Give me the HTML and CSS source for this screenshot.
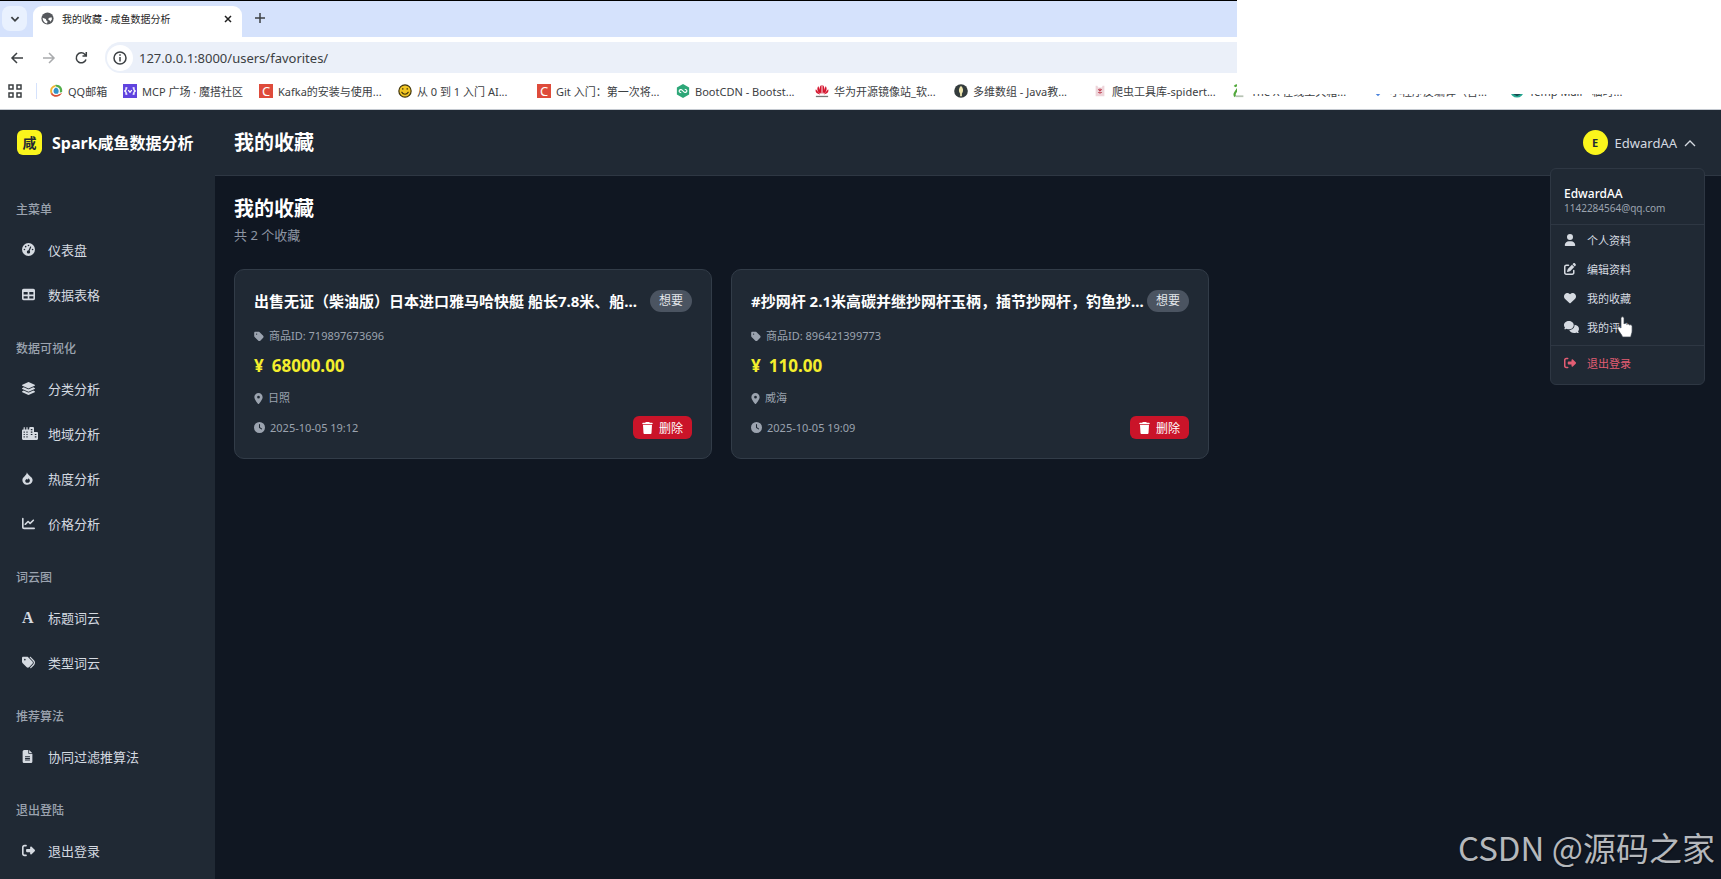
FILE: index.html
```html
<!DOCTYPE html>
<html lang="zh-CN">
<head>
    <meta charset="UTF-8">
    <meta name="viewport" content="width=device-width, initial-scale=1.0">
    <title>我的收藏 - 咸鱼数据分析</title>
    <link rel="stylesheet" href="styles.css">
</head>
<body>

    <svg class="sprite" aria-hidden="true">
        <symbol id="gauge" viewBox="0 0 512 512"><path fill-rule="evenodd" d="M0 256a256 256 0 1 1 512 0A256 256 0 1 1 0 256zM288 96a32 32 0 1 0-64 0 32 32 0 1 0 64 0zM256 416c35 0 64-29 64-64 0-17-7-33-18-45l60-136c5-12 0-26-12-32s-27 0-32 12l-60 137h-2c-35 0-64 29-64 64s29 64 64 64zM176 144a32 32 0 1 0-64 0 32 32 0 1 0 64 0zM96 288a32 32 0 1 0 0-64 32 32 0 1 0 0 64zm352-32a32 32 0 1 0-64 0 32 32 0 1 0 64 0z"/></symbol>
        <symbol id="table" viewBox="0 0 512 512"><path fill-rule="evenodd" d="M64 256V160H224v96H64zm0 64H224v96H64V320zm224 96V320H448v96H288zM448 256H288V160H448v96zM64 32C28.7 32 0 60.7 0 96V416c0 35.3 28.7 64 64 64H448c35.3 0 64-28.7 64-64V96c0-35.3-28.7-64-64-64H64z"/></symbol>
        <symbol id="layers" viewBox="0 0 512 512"><path d="M233 5q23-10 46 0l219 101q14 7 14 22t-14 22L279 251q-23 10-46 0L14 150Q0 143 0 128t14-22zM14 234l53-25 152 71q37 16 74 0l152-71 53 25q14 7 14 22t-14 22L279 379q-23 10-46 0L14 278Q0 271 0 256t14-22zM14 362l53-25 152 71q37 16 74 0l152-71 53 25q14 7 14 22t-14 22L279 507q-23 10-46 0L14 406Q0 399 0 384t14-22z"/></symbol>
        <symbol id="city" viewBox="0 0 640 512"><path fill-rule="evenodd" d="M480 48c0-26.500-21.500-48-48-48H336c-26.500 0-48 21.500-48 48V96H224V24c0-13-11-24-24-24s-24 11-24 24V96H112V24C112 11 101 0 88 0S64 11 64 24V96H48C21.500 96 0 117.500 0 144V464c0 26.500 21.500 48 48 48H592c26.500 0 48-21.500 48-48V240c0-26.500-21.500-48-48-48H480V48zM64 176h48v48H64zM176 176h48v48h-48zM64 272h48v48H64zM176 272h48v48h-48zM64 368h48v48H64zM176 368h48v48h-48zM352 80h64v48h-64zM352 176h64v48h-64zM352 272h64v48h-64zM512 272h64v48h-64zM512 368h64v48h-64z"/></symbol>
        <symbol id="fire" viewBox="0 0 448 512"><path fill-rule="evenodd" d="M200 4c12 60 60 90 120 150 60 48 112 96 112 168 0 110-93 190-208 190S16 432 16 312c0-70 50-110 100-160 50-45 80-80 84-148zM224 432c58 0 96-38 96-88 0-42-30-62-60-96-6 36-14 50-34 60-10-10-16-22-20-40-40 26-74 46-74 86 0 46 40 78 92 78z"/></symbol>
        <symbol id="chart" viewBox="0 0 512 512"><path d="M64 64c0-17.700-14.300-32-32-32S0 46.300 0 64V400c0 44.200 35.800 80 80 80H480c17.700 0 32-14.300 32-32s-14.300-32-32-32H80c-8.800 0-16-7.200-16-16V64zm406.600 86.600c12.500-12.500 12.500-32.800 0-45.300s-32.800-12.500-45.300 0L320 210.700l-57.400-57.400c-12.500-12.500-32.800-12.500-45.300 0l-112 112c-12.500 12.500-12.500 32.800 0 45.300s32.800 12.500 45.300 0L240 221.300l57.400 57.400c12.500 12.500 32.800 12.500 45.300 0l128-128z"/></symbol>
        <symbol id="tags" viewBox="0 0 512 512"><path d="M345 39.100L472.800 168.400c52.400 53 52.400 138.200 0 191.200L360.800 472.900c-9.300 9.400-24.500 9.500-33.900 .2s-9.500-24.500-.2-33.900L438.600 325.900c33.900-34.300 33.900-89.400 0-123.700L310.900 72.900c-9.300-9.400-9.200-24.600 .2-33.900s24.600-9.200 33.900 .2zM0 229.500V80C0 53.500 21.500 32 48 32H197.500c17 0 33.300 6.700 45.300 18.700l168 168c25 25 25 65.500 0 90.500L277.300 442.700c-25 25-65.500 25-90.500 0l-168-168C6.700 262.700 0 246.500 0 229.500zM144 144a32 32 0 1 0 -64 0 32 32 0 1 0 64 0z"/></symbol>
        <symbol id="tag" viewBox="0 0 448 512"><path fill-rule="evenodd" d="M0 80V229.500c0 17 6.700 33.300 18.700 45.300l176 176c25 25 65.500 25 90.500 0L418.700 317.300c25-25 25-65.500 0-90.500l-176-176c-12-12-28.300-18.700-45.300-18.700H48C21.500 32 0 53.500 0 80zm112 32a32 32 0 1 1 0 64 32 32 0 1 1 0-64z"/></symbol>
        <symbol id="file" viewBox="0 0 384 512"><path fill-rule="evenodd" d="M64 0C28.700 0 0 28.700 0 64V448c0 35.300 28.700 64 64 64H320c35.300 0 64-28.700 64-64V160H256c-17.700 0-32-14.300-32-32V0H64zM256 0V128H384L256 0zM96 248H288v40H96zM96 312H288v40H96zM96 376H288v40H96z"/></symbol>
        <symbol id="logout" viewBox="0 0 512 512"><path d="M377.900 105.900L500.700 228.700c7.200 7.200 11.300 17.100 11.300 27.300s-4.100 20.100-11.300 27.300L377.900 406.100c-6.400 6.400-15 9.900-24 9.900c-18.700 0-33.900-15.200-33.900-33.900l0-62.100-128 0c-17.700 0-32-14.300-32-32l0-64c0-17.700 14.300-32 32-32l128 0 0-62.100c0-18.700 15.200-33.900 33.900-33.900c9 0 17.600 3.600 24 9.900zM160 96L96 96c-17.700 0-32 14.300-32 32l0 256c0 17.700 14.300 32 32 32l64 0c17.700 0 32 14.300 32 32s-14.300 32-32 32l-64 0c-53 0-96-43-96-96L0 128C0 75 43 32 96 32l64 0c17.700 0 32 14.300 32 32s-14.300 32-32 32z"/></symbol>
        <symbol id="pin" viewBox="0 0 384 512"><path fill-rule="evenodd" d="M215.700 499.200C267 435 384 279.400 384 192C384 86 298 0 192 0S0 86 0 192c0 87.400 117 243 168.300 307.200c12.300 15.300 35.100 15.300 47.400 0zM192 128a64 64 0 1 1 0 128 64 64 0 1 1 0-128z"/></symbol>
        <symbol id="clock" viewBox="0 0 512 512"><path fill-rule="evenodd" d="M256 0a256 256 0 1 1 0 512A256 256 0 1 1 256 0zM232 120V256c0 8 4 15.500 10.700 20l96 64c11 7.400 25.900 4.400 33.300-6.700s4.400-25.900-6.700-33.300L280 243.200V120c0-13.300-10.700-24-24-24s-24 10.700-24 24z"/></symbol>
        <symbol id="trash" viewBox="0 0 448 512"><path d="M135.200 17.700L128 32H32C14.300 32 0 46.300 0 64S14.300 96 32 96H416c17.700 0 32-14.300 32-32s-14.300-32-32-32H320l-7.200-14.300C307.400 6.800 296.300 0 284.200 0H163.800c-12.100 0-23.200 6.800-28.600 17.700zM416 128H32L53.200 467c1.600 25.300 22.600 45 47.900 45H346.900c25.300 0 46.300-19.700 47.900-45L416 128z"/></symbol>
        <symbol id="user" viewBox="0 0 448 512"><path d="M224 256A128 128 0 1 0 224 0a128 128 0 1 0 0 256zm-45.700 48C79.800 304 0 383.800 0 482.300C0 498.700 13.300 512 29.700 512H418.300c16.400 0 29.700-13.300 29.700-29.700C448 383.800 368.200 304 269.700 304H178.300z"/></symbol>
        <symbol id="edit" viewBox="0 0 512 512"><path d="M471.600 21.700c-21.900-21.900-57.300-21.900-79.200 0L362.300 51.700l97.900 97.900 30.100-30.100c21.900-21.900 21.900-57.300 0-79.200L471.600 21.700zm-299.200 220c-6.100 6.100-10.800 13.600-13.500 21.900l-29.600 88.800c-2.900 8.600-.6 18.100 5.800 24.600s15.900 8.700 24.600 5.800l88.800-29.600c8.200-2.700 15.700-7.400 21.900-13.500L437.700 172.300 339.700 74.300 172.400 241.700zM96 64C43 64 0 107 0 160V416c0 53 43 96 96 96H352c53 0 96-43 96-96V320c0-17.700-14.300-32-32-32s-32 14.300-32 32v96c0 17.700-14.300 32-32 32H96c-17.700 0-32-14.300-32-32V160c0-17.700 14.300-32 32-32h96c17.700 0 32-14.300 32-32s-14.300-32-32-32H96z"/></symbol>
        <symbol id="heart" viewBox="0 0 512 512"><path d="M47.600 300.400L228.300 469.100c7.500 7 17.400 10.900 27.700 10.900s20.200-3.900 27.700-10.900L464.400 300.400c30.400-28.300 47.600-68 47.600-109.500v-5.800c0-69.900-50.500-129.500-119.400-141C347 36.500 300.600 51.400 268 84L256 96 244 84c-32.600-32.600-79-47.500-124.600-39.900C50.500 55.600 0 115.200 0 185.100v5.800c0 41.500 17.200 81.200 47.600 109.500z"/></symbol>
        <symbol id="comments" viewBox="0 0 640 512"><path d="M208 352c115 0 208-79 208-176S323 0 208 0 0 79 0 176c0 39 15 74 40 103-4 21-15 38-26 51-8 9-2 22 10 22 30 0 63-11 88-25 28 16 61 25 96 25zM448 176c0 112-99 197-222 207 28 75 110 129 206 129 35 0 68-9 96-25 25 14 58 25 88 25 12 0 18-13 10-22-11-13-22-30-26-51 25-29 40-64 40-103 0-91-84-167-193-176 1 5 1 11 1 16z"/></symbol>
        <symbol id="hand" viewBox="0 0 16 22"><path fill="#fff" stroke="#39424d" stroke-width=".7" d="M4 12V2.500C4 .3 7 .3 7 2.500V8c.6-1 2.600-.8 2.800.5.700-1 2.500-.7 2.700.6.900-.8 2.600-.2 2.600 1.300V15c0 2.500-1 3-1.300 6H5.500C5 18.500 1.800 16 .8 12.800.2 11 2 10.300 3 11.300z"/></symbol>
    </svg>

    <div class="browser">
        <div class="tab-bar">
            <button class="tab-search" aria-label="搜索标签页"><svg viewBox="0 0 10 10"><path d="M2 3.500l3 3 3-3"/></svg></button>
            <div class="tab">
                <svg class="globe" viewBox="0 0 16 16"><circle cx="8" cy="8" r="7.500" fill="#55585c"/><path fill="#fff" d="M2 7l4 1.500.5 2 1.500 1-.5 2.500C5 14 2 11 2 7zM9.500 7.500l3.500-1 .5 2.500-2 3-1-2-1.500-.5z"/></svg>
                <span>我的收藏 - 咸鱼数据分析</span>
                <button class="tab-close" aria-label="关闭"><svg viewBox="0 0 10 10"><path d="M2 2l6 6M8 2L2 8"/></svg></button>
            </div>
            <button class="tab-new" aria-label="新标签页"><svg viewBox="0 0 10 10"><path d="M5 0v10M0 5h10"/></svg></button>
        </div>
        <div class="toolbar">
            <button aria-label="后退"><svg viewBox="0 0 16 16"><path d="M14 8H3M8 3L3 8l5 5"/></svg></button>
            <button class="off" aria-label="前进" disabled><svg viewBox="0 0 16 16"><path d="M2 8h11M8 3l5 5-5 5"/></svg></button>
            <button aria-label="重新加载"><svg viewBox="0 0 16 16"><path d="M13 9.500A5 5 0 1 1 12 4.500l1 1M13.300 2v4H9.500"/></svg></button>
            <label class="address">
                <span class="info"><svg viewBox="0 0 16 16"><circle cx="8" cy="8" r="6"/><path d="M8 7v4.500M8 4.300v1.500"/></svg></span>
                <input type="text" value="127.0.0.1:8000/users/favorites/" aria-label="地址栏">
            </label>
        </div>
        <nav class="bookmarks">
            <button class="apps" aria-label="应用"><svg viewBox="0 0 16 16"><path d="M2 2h4v4H2zM10 2h4v4h-4zM2 10h4v4H2zM10 10h4v4h-4z"/></svg></button>
            <a class="short" href="#"><svg viewBox="0 0 16 16"><path fill="#f2b431" d="M8 1a7 7 0 0 0-6 10l3-1 2-6z"/><path fill="#54ae4b" d="M7 1c5-1 9 3 8 8l-3 1-2-5z"/><path fill="#d84e33" d="M2 11c3 5 10 5 13-1-5 3-8 2-10-1z"/><circle cx="8" cy="8" r="4.500" fill="#fff"/><path fill="#3192c9" d="M8 4c-3 1-4 6-1 7h3c2-2 1-6-2-7z"/></svg>QQ邮箱</a>
            <a href="#"><svg viewBox="0 0 16 16"><path fill="#6044df" d="M0 0h16v16H0z"/><path fill="none" stroke="#fff" stroke-width="1.500" d="M5 4.500H3.500v2L2 8l1.500 1.500v2H5M11 4.500h1.500v2L14 8l-1.500 1.500v2H11M6 7l2 2.500L10 7"/></svg>MCP 广场 · 魔搭社区</a>
            <a class="long" href="#"><span class="c-icon">C</span>Kafka的安装与使用...</a>
            <a class="long" href="#"><svg viewBox="0 0 16 16"><circle cx="8" cy="8" r="7" fill="#f2c624" stroke="#41350b" stroke-width="1.400"/><path fill="none" stroke="#41350b" stroke-width="1.200" d="M4 9c2 3.500 6 3.500 8 0M5.500 4.500v2M10.500 4.500v2"/></svg>从 0 到 1 入门 AI...</a>
            <a class="long" href="#"><span class="c-icon">C</span>Git 入门：第一次将...</a>
            <a class="long" href="#"><svg viewBox="0 0 16 16"><path fill="#2da778" d="M8 0l7 4v8l-7 4-7-4V4z"/><path fill="none" stroke="#fff" stroke-width="1.300" d="M6 10c-5-1-1-5 1-3l2 2c2 2 6-2 1-3"/></svg>BootCDN - Bootst...</a>
            <a class="long" href="#"><svg viewBox="0 0 16 16"><path fill="#d4142d" d="M7.500 11C4 8 5 2 7.500 1zM8.500 11C12 8 11 2 8.500 1zM6.500 11C2 9 2 4 4 2.500zM9.500 11C14 9 14 4 12 2.500zM6 12C1 11 0 8 1 6zM10 12c5-1 6-4 5-6z"/><path fill="#777" d="M1 13.500h14V15H1z"/></svg>华为开源镜像站_软...</a>
            <a class="long" href="#"><svg viewBox="0 0 16 16"><circle cx="8" cy="8" r="7.800" fill="#343c3d"/><path fill="#efe6b0" d="M8 2c3 3 3 6 1 9v3H7v-3C5 8 5 5 8 2z"/></svg>多维数组 - Java教...</a>
            <a class="long" href="#"><svg viewBox="0 0 16 16"><path fill="#eed5da" d="M3 2h2l1 2h4l1-2h2v12H3z"/><path fill="none" stroke="#bb3a4d" stroke-width="1.200" d="M6 6l4 4M10 6l-4 4M8 5v6"/></svg>爬虫工具库-spidert...</a>
            <a class="long" href="#"><svg viewBox="0 0 16 16"><path fill="none" stroke="#51a83b" stroke-width="2.500" d="M3 3c2-3 6-1 4 2S1 12 4 14"/><path stroke="#b7c3b4" stroke-width="2" d="M4 14h9"/></svg>The X 在线工具箱...</a>
            <a class="long" href="#"><svg viewBox="0 0 16 16"><path fill="#4b83dc" d="M2 8h12l-6 6z"/></svg>小程序反编译（含...</a>
            <a class="long" href="#"><svg viewBox="0 0 16 16"><circle cx="8" cy="8" r="7.500" fill="#27aa93"/><path fill="#184b51" d="M3 6h10v5l-5 3-5-3z"/></svg>Temp Mail - 临时...</a>
        </nav>
        <div class="blank"></div>
    </div>

    <div class="app">
        <aside class="sidebar">
            <a class="brand" href="#"><span class="logo">咸</span>Spark咸鱼数据分析</a>
            <nav class="menu">
                <h3>主菜单</h3>
                <a href="#"><span class="icon"><svg><use href="#gauge"/></svg></span>仪表盘</a>
                <a href="#"><span class="icon"><svg><use href="#table"/></svg></span>数据表格</a>
                <h3>数据可视化</h3>
                <a href="#"><span class="icon"><svg><use href="#layers"/></svg></span>分类分析</a>
                <a href="#"><span class="icon"><svg class="wide"><use href="#city"/></svg></span>地域分析</a>
                <a href="#"><span class="icon"><svg class="narrow"><use href="#fire"/></svg></span>热度分析</a>
                <a href="#"><span class="icon"><svg><use href="#chart"/></svg></span>价格分析</a>
                <h3>词云图</h3>
                <a href="#"><span class="icon letter">A</span>标题词云</a>
                <a href="#"><span class="icon"><svg><use href="#tags"/></svg></span>类型词云</a>
                <h3>推荐算法</h3>
                <a href="#"><span class="icon"><svg class="narrow"><use href="#file"/></svg></span>协同过滤推算法</a>
                <h3>退出登陆</h3>
                <a href="#"><span class="icon"><svg><use href="#logout"/></svg></span>退出登录</a>
            </nav>
        </aside>

        <div class="content">
            <header class="header">
                <h1>我的收藏</h1>
                <div class="user">
                    <button class="user-btn">
                        <span class="avatar">E</span>
                        <span>EdwardAA</span>
                        <svg class="caret" viewBox="0 0 12 8"><path d="M1 7l5-5 5 5"/></svg>
                    </button>
                    <div class="dropdown">
                        <div class="profile">
                            <strong>EdwardAA</strong>
                            <span>1142284564@qq.com</span>
                        </div>
                        <a href="#"><span class="icon"><svg class="narrow"><use href="#user"/></svg></span>个人资料</a>
                        <a href="#"><span class="icon"><svg><use href="#edit"/></svg></span>编辑资料</a>
                        <a href="#"><span class="icon"><svg><use href="#heart"/></svg></span>我的收藏</a>
                        <a href="#"><span class="icon"><svg class="wide"><use href="#comments"/></svg></span>我的评价<svg class="cursor"><use href="#hand"/></svg></a>
                        <a class="exit" href="#"><span class="icon"><svg><use href="#logout"/></svg></span>退出登录</a>
                    </div>
                </div>
            </header>

            <main class="main">
                <h2>我的收藏</h2>
                <p class="count">共 2 个收藏</p>
                <div class="cards">
                    <article class="card">
                        <div class="card-top">
                            <h3>出售无证（柴油版）日本进口雅马哈快艇 船长7.8米、船...</h3>
                            <span class="badge">想要</span>
                        </div>
                        <p class="meta"><svg><use href="#tag"/></svg>商品ID: 719897673696</p>
                        <p class="price"><span>¥</span>68000.00</p>
                        <p class="meta"><svg class="pin"><use href="#pin"/></svg>日照</p>
                        <div class="card-bottom">
                            <p class="meta"><svg class="clock"><use href="#clock"/></svg>2025-10-05 19:12</p>
                            <button class="delete"><svg><use href="#trash"/></svg>删除</button>
                        </div>
                    </article>
                    <article class="card">
                        <div class="card-top">
                            <h3>#抄网杆 2.1米高碳并继抄网杆玉柄，插节抄网杆，钓鱼抄...</h3>
                            <span class="badge">想要</span>
                        </div>
                        <p class="meta"><svg><use href="#tag"/></svg>商品ID: 896421399773</p>
                        <p class="price"><span>¥</span>110.00</p>
                        <p class="meta"><svg class="pin"><use href="#pin"/></svg>威海</p>
                        <div class="card-bottom">
                            <p class="meta"><svg class="clock"><use href="#clock"/></svg>2025-10-05 19:09</p>
                            <button class="delete"><svg><use href="#trash"/></svg>删除</button>
                        </div>
                    </article>
                </div>
            </main>
        </div>
    </div>

    <div class="watermark">CSDN @源码之家</div>

</body>
</html>
```
FILE: styles.css
```css
* {
    box-sizing: border-box;
}

body {
    margin: 0;
    min-height: 100vh;
    display: flex;
    flex-direction: column;
    position: relative;
    overflow-x: hidden;
    background-color: #101722;
    color: #d5dae1;
    font-family: "Noto Sans", "Noto Sans CJK SC", sans-serif;
    font-size: 13px;
}

h1, h2, h3, p {
    margin: 0;
}

a {
    color: inherit;
    text-decoration: none;
}

button {
    padding: 0;
    border: none;
    background: none;
    color: inherit;
    font-family: inherit;
    cursor: pointer;
}

svg {
    display: block;
    flex: none;
    fill: currentColor;
}

.sprite {
    position: absolute;
    width: 0;
    height: 0;
}

/* 浏览器顶部 */
.browser {
    position: relative;
    height: 110px;
    overflow: hidden;
    background-color: #fff;
    border-bottom: 1px solid #c4c9d0;
    color: #3c4043;
}

.browser button svg,
.info svg {
    width: 16px;
    height: 16px;
    fill: none;
    stroke: currentColor;
    stroke-width: 1.5;
}

.tab-bar {
    display: flex;
    height: 37px;
    padding-left: 2px;
    background-color: #d5e2fc;
    border-top: 1px solid #000;
}

.tab-search {
    display: flex;
    align-items: center;
    justify-content: center;
    width: 25px;
    height: 25px;
    margin: 5px 6px 0 0;
    border-radius: 8px;
    background-color: #e9f1fe;
}

.tab-bar .tab-search svg {
    width: 12px;
    height: 12px;
}

.tab {
    display: flex;
    align-items: center;
    gap: 8px;
    width: 209px;
    margin-top: 5px;
    padding: 0 9px 6px 8px;
    border-radius: 9px 9px 0 0;
    background-color: #fff;
    color: #1f1f1f;
    font-size: 10px;
    white-space: nowrap;
}

.globe {
    width: 13px;
    height: 13px;
}

.tab-close {
    margin-left: auto;
}

.tab-bar .tab-close svg,
.tab-bar .tab-new svg {
    width: 10px;
    height: 10px;
}

.tab-new {
    margin: 0 0 2px 13px;
}

.toolbar {
    display: flex;
    align-items: center;
    gap: 16px;
    height: 41px;
    padding-left: 9px;
}

.toolbar .off {
    color: #a9abad;
}

.address {
    display: flex;
    align-items: center;
    flex: 1;
    height: 31px;
    padding-left: 2px;
    border-radius: 16px 0 0 16px;
    background-color: #ebf0f9;
}

.info {
    padding: 5px;
    border-radius: 50%;
    background-color: #fff;
}

.address input {
    flex: 1;
    margin-left: 4px;
    border: none;
    outline: none;
    background: none;
    color: #3c4043;
    font-family: inherit;
    font-size: 13px;
}

.bookmarks {
    display: flex;
    align-items: center;
    height: 26px;
    font-size: 11px;
    white-space: nowrap;
}

.apps {
    padding: 0 13px 0 7px;
    margin-right: 12px;
    border-right: 1px solid #d5e2fc;
}

.bookmarks a {
    display: flex;
    align-items: center;
    flex: none;
    gap: 5px;
    width: 136px;
}

.bookmarks .short {
    width: 74px;
}

.bookmarks .long {
    width: 139px;
}

.bookmarks a svg {
    width: 14px;
    height: 14px;
}

.c-icon {
    width: 14px;
    height: 14px;
    background-color: #de4b3b;
    color: #fff;
    font-size: 13px;
    line-height: 14px;
    text-align: center;
}

/* 右上角的空白遮挡 */
.blank {
    position: absolute;
    top: 0;
    left: 1237px;
    right: 0;
    height: 94px;
    background-color: #fff;
}

.app {
    display: flex;
    flex: 1;
}

/* 侧边栏 */
.sidebar {
    flex: none;
    width: 215px;
    background-color: #202934;
}

.brand {
    display: flex;
    align-items: center;
    gap: 10px;
    height: 64px;
    padding-left: 17px;
    color: #fff;
    font-size: 16px;
    font-weight: bold;
    white-space: nowrap;
}

.logo {
    width: 25px;
    height: 25px;
    border-radius: 6px;
    background-color: #faf51c;
    color: #202934;
    font-size: 14px;
    line-height: 25px;
    text-align: center;
}

.menu {
    padding-top: 4px;
}

.menu h3 {
    margin: 23px 0 8px 16px;
    color: #9ba3af;
    font-size: 12px;
    font-weight: 500;
    line-height: 18px;
}

.menu a {
    display: flex;
    align-items: center;
    gap: 8px;
    height: 45px;
    padding-left: 22px;
}

.icon {
    width: 18px;
    flex: none;
}

.icon svg {
    width: 13px;
    height: 13px;
}

.icon .wide {
    width: 16px;
}

.icon .narrow {
    width: 11px;
}

.letter {
    font-family: "Liberation Serif", serif;
    font-size: 16px;
    font-weight: bold;
}

/* 顶部栏 */
.content {
    flex: 1;
    min-width: 0;
}

.header {
    display: flex;
    align-items: center;
    justify-content: space-between;
    height: 66px;
    padding: 0 25px 0 19px;
    background-color: #202934;
    border-bottom: 1px solid #2e3743;
}

.header h1,
.main h2 {
    color: #fff;
    font-size: 20px;
    line-height: 28px;
}

.user {
    position: relative;
}

.user-btn {
    display: flex;
    align-items: center;
    gap: 7px;
    font-size: 13px;
}

.avatar {
    width: 25px;
    height: 25px;
    border-radius: 50%;
    background-color: #faf51c;
    color: #202934;
    font-size: 11px;
    font-weight: bold;
    line-height: 25px;
}

.caret {
    width: 12px;
    height: 8px;
    fill: none;
    stroke: currentColor;
    stroke-width: 1.3;
}

.dropdown {
    position: absolute;
    top: 38px;
    right: -9px;
    width: 155px;
    padding-bottom: 4px;
    border: 1px solid #2e3743;
    border-radius: 6px;
    background-color: #202934;
    font-size: 11px;
}

.profile {
    display: flex;
    flex-direction: column;
    padding: 17px 13px 9px;
    border-bottom: 1px solid #2e3743;
    font-size: 10px;
    line-height: 14px;
    color: #9ba3af;
}

.profile strong {
    color: #fff;
    font-size: 12px;
    font-weight: 500;
    line-height: 15px;
}

.dropdown a {
    position: relative;
    display: flex;
    align-items: center;
    gap: 5px;
    height: 29px;
    padding-left: 13px;
}

.dropdown .icon svg {
    width: 12px;
    height: 12px;
}

.dropdown .icon .wide {
    width: 15px;
}

.dropdown .exit {
    height: 35px;
    margin-top: 4px;
    border-top: 1px solid #2e3743;
    color: #e35d73;
}

.cursor {
    position: absolute;
    top: 4px;
    left: 66px;
    width: 16px;
    height: 22px;
}

/* 收藏列表 */
.main {
    padding: 19px 15px 20px 19px;
}

.count {
    color: #8d95a2;
    font-size: 13px;
    line-height: 24px;
}

.cards {
    display: grid;
    grid-template-columns: repeat(3, 1fr);
    gap: 19px;
    margin-top: 22px;
}

.card {
    min-width: 0;
    padding: 19px;
    border: 1px solid #323c48;
    border-radius: 10px;
    background-color: #202934;
}

.card-top,
.card-bottom {
    display: flex;
    align-items: center;
    justify-content: space-between;
}

.card-top {
    margin-bottom: 13px;
}

.card h3 {
    color: #fff;
    font-size: 15px;
    line-height: 24px;
    white-space: nowrap;
}

.badge {
    flex: none;
    padding: 0 9px;
    border-radius: 11px;
    background-color: #4b5461;
    color: #e3e6ea;
    font-size: 12px;
    line-height: 22px;
}

.meta {
    display: flex;
    align-items: center;
    gap: 5px;
    color: #9ba3af;
    font-size: 11px;
    line-height: 20px;
}

.meta svg {
    width: 10px;
    height: 11px;
}

.meta .pin {
    width: 9px;
}

.meta .clock {
    width: 11px;
}

.price {
    display: flex;
    gap: 8px;
    margin: 8px 0 10px;
    color: #f4ee2d;
    font-size: 17px;
    font-weight: bold;
    line-height: 24px;
}

.card-bottom {
    margin-top: 8px;
}

.delete {
    display: flex;
    align-items: center;
    gap: 6px;
    height: 23px;
    padding: 0 9px;
    border-radius: 6px;
    background-color: #ca1429;
    color: #fff;
    font-size: 12px;
}

.delete svg {
    width: 11px;
    height: 12px;
}

/* 水印 */
.watermark {
    position: absolute;
    right: 6px;
    bottom: 7px;
    color: #b5b8bc;
    font-family: "Noto Sans CJK SC", sans-serif;
    font-size: 33px;
    line-height: 50px;
    text-shadow: 1px 1px 1px #0b1019;
}
```
